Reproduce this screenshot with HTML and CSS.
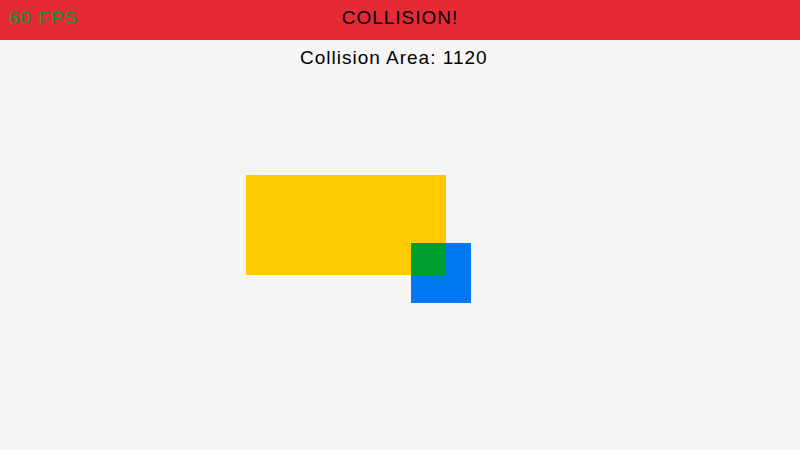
FILE: index.html
```html
<!DOCTYPE html>
<html>
<head>
<meta charset="utf-8">
<link rel="stylesheet" href="styles.css">
</head>
<body>
<header class="bar">
  <span class="fps">60 FPS</span>
  <span class="status">COLLISION!</span>
</header>
<div class="info">Collision Area: 1120</div>
<div class="canvas">
  <div class="rect rect-a"></div>
  <div class="rect rect-b"></div>
  <div class="rect rect-overlap"></div>
</div>
</body>
</html>
```
FILE: styles.css
```css
html, body {
  margin: 0;
  padding: 0;
  width: 800px;
  height: 450px;
  overflow: hidden;
  background: #f5f5f5;
  font-family: "Liberation Sans", Arial, sans-serif;
  font-size: 19px;
  line-height: 20px;
  letter-spacing: 1px;
}
.bar {
  position: relative;
  height: 40px;
  box-sizing: border-box;
  padding-top: 8px;
  background: #e62937;
  text-align: center;
}
.fps {
  position: absolute;
  left: 9px;
  top: 8px;
  color: #009e2f;
}
.status {
  color: #000;
}
.info {
  padding-top: 8px;
  padding-left: 300px;
  color: #000;
}
.canvas {
  position: relative;
  height: 382px;
}
.rect {
  position: absolute;
}
.rect-a {
  left: 246px;
  top: 107px;
  width: 200px;
  height: 100px;
  background: #ffcb00;
}
.rect-b {
  left: 411px;
  top: 175px;
  width: 60px;
  height: 60px;
  background: #0079f1;
}
.rect-overlap {
  left: 411px;
  top: 175px;
  width: 35px;
  height: 32px;
  background: #009e2f;
}
```
